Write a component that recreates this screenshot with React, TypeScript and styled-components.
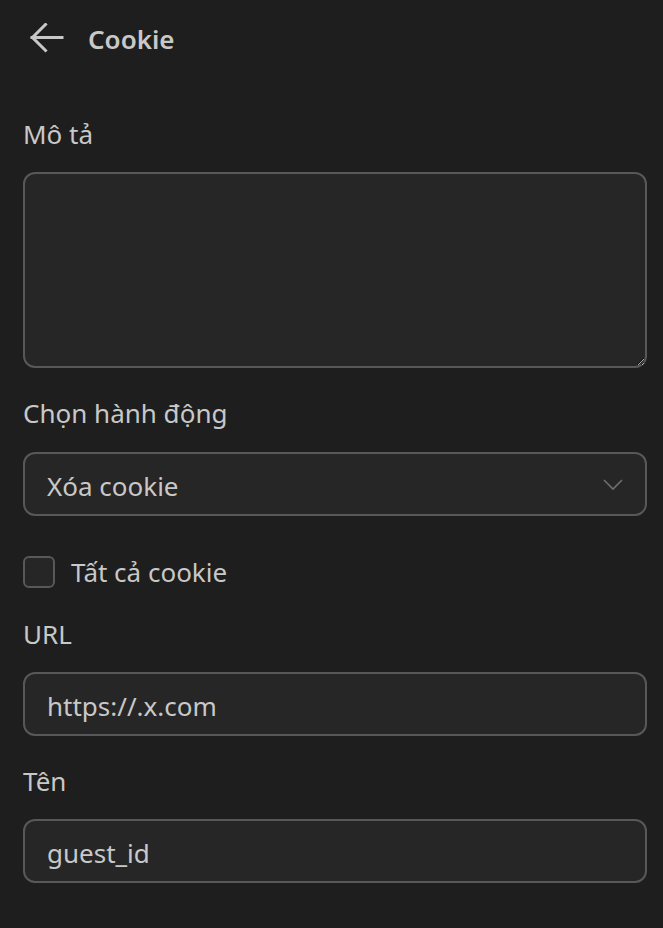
import React from "react";
import styled, { createGlobalStyle } from "styled-components";

const Global = createGlobalStyle`
  html, body { margin: 0; padding: 0; background: #1e1e1e; }
  body { font-family: "Noto Sans", "Open Sans", sans-serif; color: #c8c8c8; }
  * { box-sizing: border-box; }
`;

const Page = styled.div`
  width: 663px;
  min-height: 928px;
  background: #1e1e1e;
  padding: 0 16px 0 23px;
  display: flex;
  flex-direction: column;
`;

const Header = styled.header`
  height: 80px;
  display: flex;
  align-items: center;
  gap: 24px;
  padding-left: 7px;
`;

const BackButton = styled.button`
  all: unset;
  display: flex;
  width: 34px;
  height: 34px;
  align-items: center;
  justify-content: center;
  color: #c8c8c8;
`;

const Title = styled.h1`
  margin: 0;
  font-size: 26px;
  font-weight: 600;
  color: #c8c8c8;
  line-height: 32px;
  margin-top: -2px;
`;

const Field = styled.div<{ $gap?: number; $labelGap?: number }>`
  display: flex;
  flex-direction: column;
  gap: ${(p) => p.$labelGap ?? 22}px;
  margin-top: ${(p) => p.$gap ?? 29}px;
`;

const Label = styled.label`
  font-size: 26px;
  line-height: 32px;
  color: #c8c8c8;
`;

const TextArea = styled.textarea`
  color-scheme: dark;
  width: 100%;
  height: 196px;
  background: #262626;
  border: 2px solid #585858;
  border-radius: 12px;
  resize: vertical;
  font: inherit;
  color: #c8c8c8;
  outline: none;
`;

const Box = styled.div`
  height: 64px;
  background: #262626;
  border: 2px solid #585858;
  border-radius: 12px;
  display: flex;
  align-items: center;
  padding: 3px 22px 0;
  font-size: 26px;
  color: #c8c8c8;
`;

const Value = styled.span`
  flex: 1;
`;

const Chevron = styled.svg`
  margin-top: -3px;
`;

const CheckRow = styled.div`
  display: flex;
  align-items: center;
  gap: 16px;
  margin-top: 40px;
  height: 32px;
`;

const CheckBox = styled.span`
  width: 32px;
  height: 32px;
  border: 2px solid #585858;
  border-radius: 6px;
  background: #262626;
`;

const CheckLabel = styled.span`
  font-size: 26px;
  line-height: 32px;
  color: #c8c8c8;
`;

export default function App() {
  return (
    <Page>
      <Global />
      <Header>
        <BackButton>
          <svg width="34" height="34" viewBox="0 0 34 34" fill="none" stroke="#c8c8c8" strokeWidth="3" strokeLinecap="square">
            <path d="M2 14.5 H32" />
            <path d="M15.5 1.5 L2.5 14.5 L15.5 27.5" />
          </svg>
        </BackButton>
        <Title>Cookie</Title>
      </Header>
      <Field $gap={38}>
        <Label>Mô tả</Label>
        <TextArea />
      </Field>
      <Field $labelGap={23}>
        <Label>Chọn hành động</Label>
        <Box>
          <Value>Xóa cookie</Value>
          <Chevron width="20" height="14" viewBox="0 0 20 14" fill="none" stroke="#6e6e6e" strokeWidth="1.6">
            <path d="M1 3 L10 12 L19 3" />
          </Chevron>
        </Box>
      </Field>
      <CheckRow>
        <CheckBox />
        <CheckLabel>Tất cả cookie</CheckLabel>
      </CheckRow>
      <Field $gap={30}>
        <Label>URL</Label>
        <Box>
          <Value>https://.x.com</Value>
        </Box>
      </Field>
      <Field>
        <Label>Tên</Label>
        <Box>
          <Value>guest_id</Value>
        </Box>
      </Field>
    </Page>
  );
}
